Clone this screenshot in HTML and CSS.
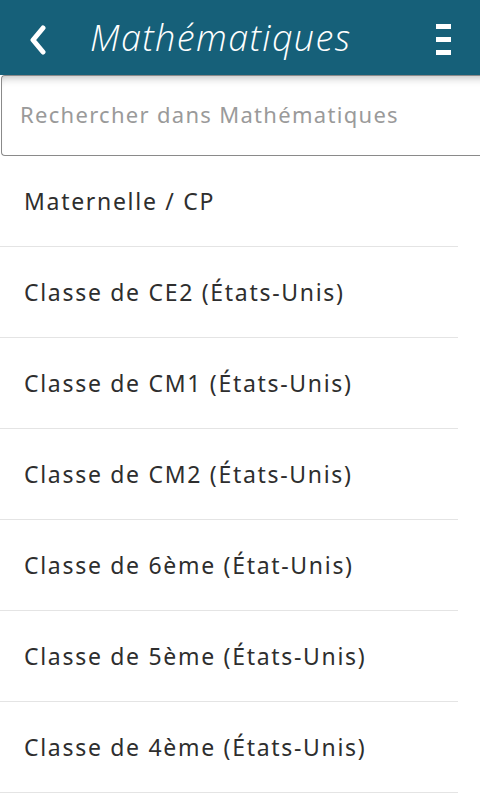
FILE: index.html
```html
<!DOCTYPE html>
<html lang="fr">
<head>
<meta charset="utf-8">
<title>Mathématiques</title>
<link rel="stylesheet" href="styles.css">
</head>
<body>
<header class="topbar">
  <button class="icon-btn back" aria-label="Retour">
    <svg width="20" height="30" viewBox="0 0 20 30"><path d="M15 3 L5 15 L15 27" fill="none" stroke="#fff" stroke-width="5" stroke-linecap="round" stroke-linejoin="round"/></svg>
  </button>
  <h1 class="title">Mathématiques</h1>
  <button class="icon-btn menu" aria-label="Menu">
    <span class="bar"></span><span class="bar"></span><span class="bar"></span>
  </button>
</header>
<div class="search">
  <input class="search-input" type="text" placeholder="Rechercher dans Mathématiques">
</div>
<ul class="list">
  <li class="item">Maternelle / CP</li>
  <li class="item">Classe de CE2 (États-Unis)</li>
  <li class="item">Classe de CM1 (États-Unis)</li>
  <li class="item">Classe de CM2 (États-Unis)</li>
  <li class="item">Classe de 6ème (État-Unis)</li>
  <li class="item">Classe de 5ème (États-Unis)</li>
  <li class="item">Classe de 4ème (États-Unis)</li>
</ul>
</body>
</html>
```
FILE: styles.css
```css
* { box-sizing: border-box; }
html, body { margin: 0; padding: 0; background: #fff; overflow: hidden; }
body { font-family: "Noto Sans", "Open Sans", sans-serif; width: 480px; height: 799px; }

.topbar {
  height: 75px;
  background: #166079;
  display: flex;
  align-items: center;
}
.icon-btn {
  background: none;
  border: 0;
  padding: 0;
  display: flex;
  align-items: center;
  justify-content: center;
}
.back { width: 20px; height: 30px; margin-left: 28px; margin-top: 4px; }
.title {
  margin: 0 0 0 42px;
  flex: 1;
  color: #fff;
  font-family: "Open Sans", sans-serif;
  font-style: italic;
  font-weight: 300;
  font-size: 36px;
  letter-spacing: 1.4px;
}
.menu {
  flex-direction: column;
  gap: 8px;
  width: 15px;
  margin-right: 29px;
  margin-top: 3px;
}
.bar { display: block; width: 15px; height: 5px; background: #fff; }

.search {
  height: 81px;
  padding-left: 1px;
}
.search-input {
  display: block;
  width: 490px;
  height: 81px;
  border: 1px solid #8a8a8a;
  border-right: 0;
  border-radius: 4px 0 0 4px;
  box-shadow: inset 0 9px 10px -8px rgba(0,0,0,0.3);
  padding: 0 0 4px 18px;
  font-family: "Noto Sans", sans-serif;
  font-size: 22px;
  letter-spacing: 1.3px;
  color: #333;
  outline: none;
  background: #fff;
}
.search-input::placeholder { color: #9a9a9a; }

.list { list-style: none; margin: 0; padding: 0; width: 458px; }
.item {
  height: 91px;
  border-bottom: 1px solid #e4e4e4;
  display: flex;
  align-items: center;
  padding-left: 24px;
  padding-bottom: 1px;
  font-size: 23px;
  letter-spacing: 1.7px;
  color: #2e2e2e;
}
```
